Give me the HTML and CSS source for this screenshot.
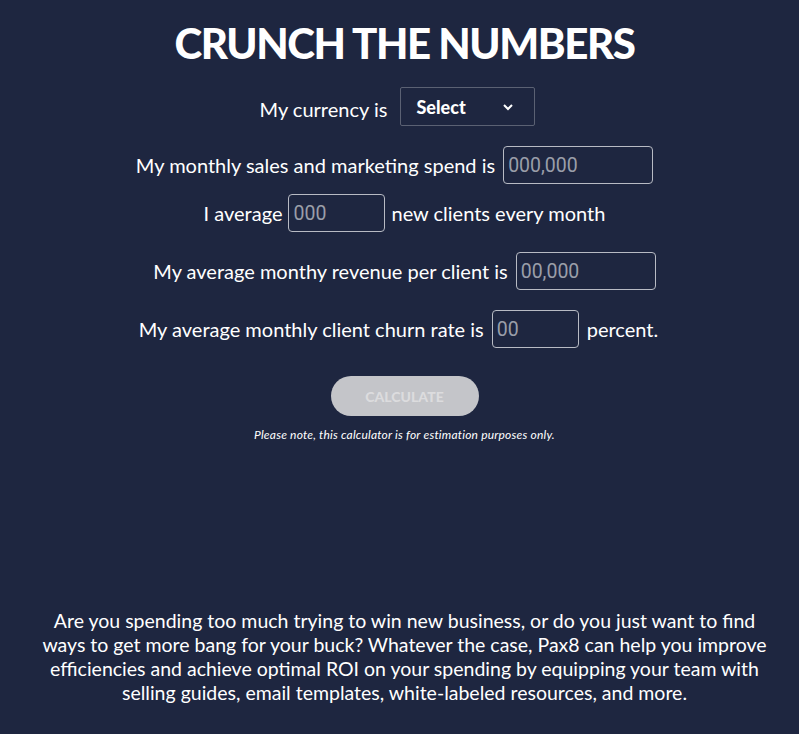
FILE: index.html
```html
<!DOCTYPE html>
<html>
  <head>
    <title>Crunch the Numbers</title>

    <!-- Page styles -->
    <link rel="stylesheet" href="styles.css">
  </head>
  <body>
    <div class="calc">
      <h1>Crunch the Numbers</h1>

      <div class="row row-currency">
        <span class="label-low">My currency is</span>
        <div class="select">
          <span>Select</span>
          <svg width="12" height="8" viewBox="0 0 12 8"><path d="M2 2 L6 6 L10 2" fill="none" stroke="#fff" stroke-width="2"/></svg>
        </div>
      </div>

      <div class="row row-spend">
        <span>My monthly sales and marketing spend is</span>
        <input class="field field-spend" type="text" placeholder="000,000">
      </div>

      <div class="row row-clients">
        <span>I average</span>
        <input class="field field-clients" type="text" placeholder="000">
        <span>new clients every month</span>
      </div>

      <div class="row row-revenue">
        <span>My average monthy revenue per client is</span>
        <input class="field field-revenue" type="text" placeholder="00,000">
      </div>

      <div class="row row-churn">
        <span>My average monthly client churn rate is</span>
        <input class="field field-churn" type="text" placeholder="00">
        <span>percent.</span>
      </div>

      <button class="calculate" disabled>Calculate</button>
      <p class="note">Please note, this calculator is for estimation purposes only.</p>
    </div>

    <p class="blurb">Are you spending too much trying to win new business, or do you just want to find ways to get more bang for your buck? Whatever the case, Pax8 can help you improve efficiencies and achieve optimal ROI on your spending by equipping your team with selling guides, email templates, white-labeled resources, and more.</p>
  </body>
</html>
```

FILE: styles.css
```css
body {
  margin: 0;
  padding-left: 10px;
  background-color: #1e2640;
  color: #fff;
  font-family: Lato, "Open Sans", sans-serif;
}
.calc {
  display: flex;
  flex-direction: column;
  align-items: center;
  padding-top: 18px;
}
h1 {
  margin: 0;
  font-size: 42px;
  line-height: 50px;
  font-weight: 900;
  letter-spacing: -1.4px;
  text-transform: uppercase;
  text-align: center;
}
.row {
  display: flex;
  align-items: center;
  justify-content: center;
  font-size: 20px;
  gap: 8px;
}
.row-currency {
  margin-top: 19px;
  padding-right: 14px;
  gap: 13px;
}
.label-low {
  padding-top: 5px;
}
.row-spend {
  margin-top: 20px;
  padding-right: 20px;
}
.row-clients {
  margin-top: 10px;
  gap: 6px;
}
.row-revenue {
  margin-top: 20px;
}
.row-churn {
  margin-top: 20px;
  padding-right: 12px;
}
.select {
  width: 135px;
  height: 39px;
  box-sizing: border-box;
  border: 1px solid #5b6173;
  border-radius: 2px;
  display: flex;
  align-items: center;
  justify-content: space-between;
  padding: 0 20px 0 15px;
  font-weight: 900;
  font-size: 18px;
}
.field {
  height: 38px;
  box-sizing: border-box;
  border: 1px solid #b8bbc4;
  border-radius: 4px;
  background: transparent;
  color: #fff;
  font-family: Roboto, Arial, sans-serif;
  font-size: 19.5px;
  padding: 0 4px;
}
.field::placeholder {
  color: #9a9ea9;
}
.field-spend {
  width: 150px;
}
.field-clients {
  width: 97px;
}
.field-revenue {
  width: 140px;
}
.field-churn {
  width: 87px;
}
.calculate {
  margin-top: 28px;
  width: 148px;
  height: 40px;
  border: none;
  border-radius: 20px;
  background-color: #c4c5c9;
  color: #dcdcde;
  font-family: Lato, sans-serif;
  font-weight: 900;
  font-size: 14px;
  text-transform: uppercase;
}
.note {
  margin: 11px 0 0;
  font-size: 12px;
  letter-spacing: 0.2px;
  font-style: italic;
}
.blurb {
  margin: 167px auto 0;
  width: 732px;
  font-size: 19.5px;
  line-height: 24px;
  text-align: center;
}
```
